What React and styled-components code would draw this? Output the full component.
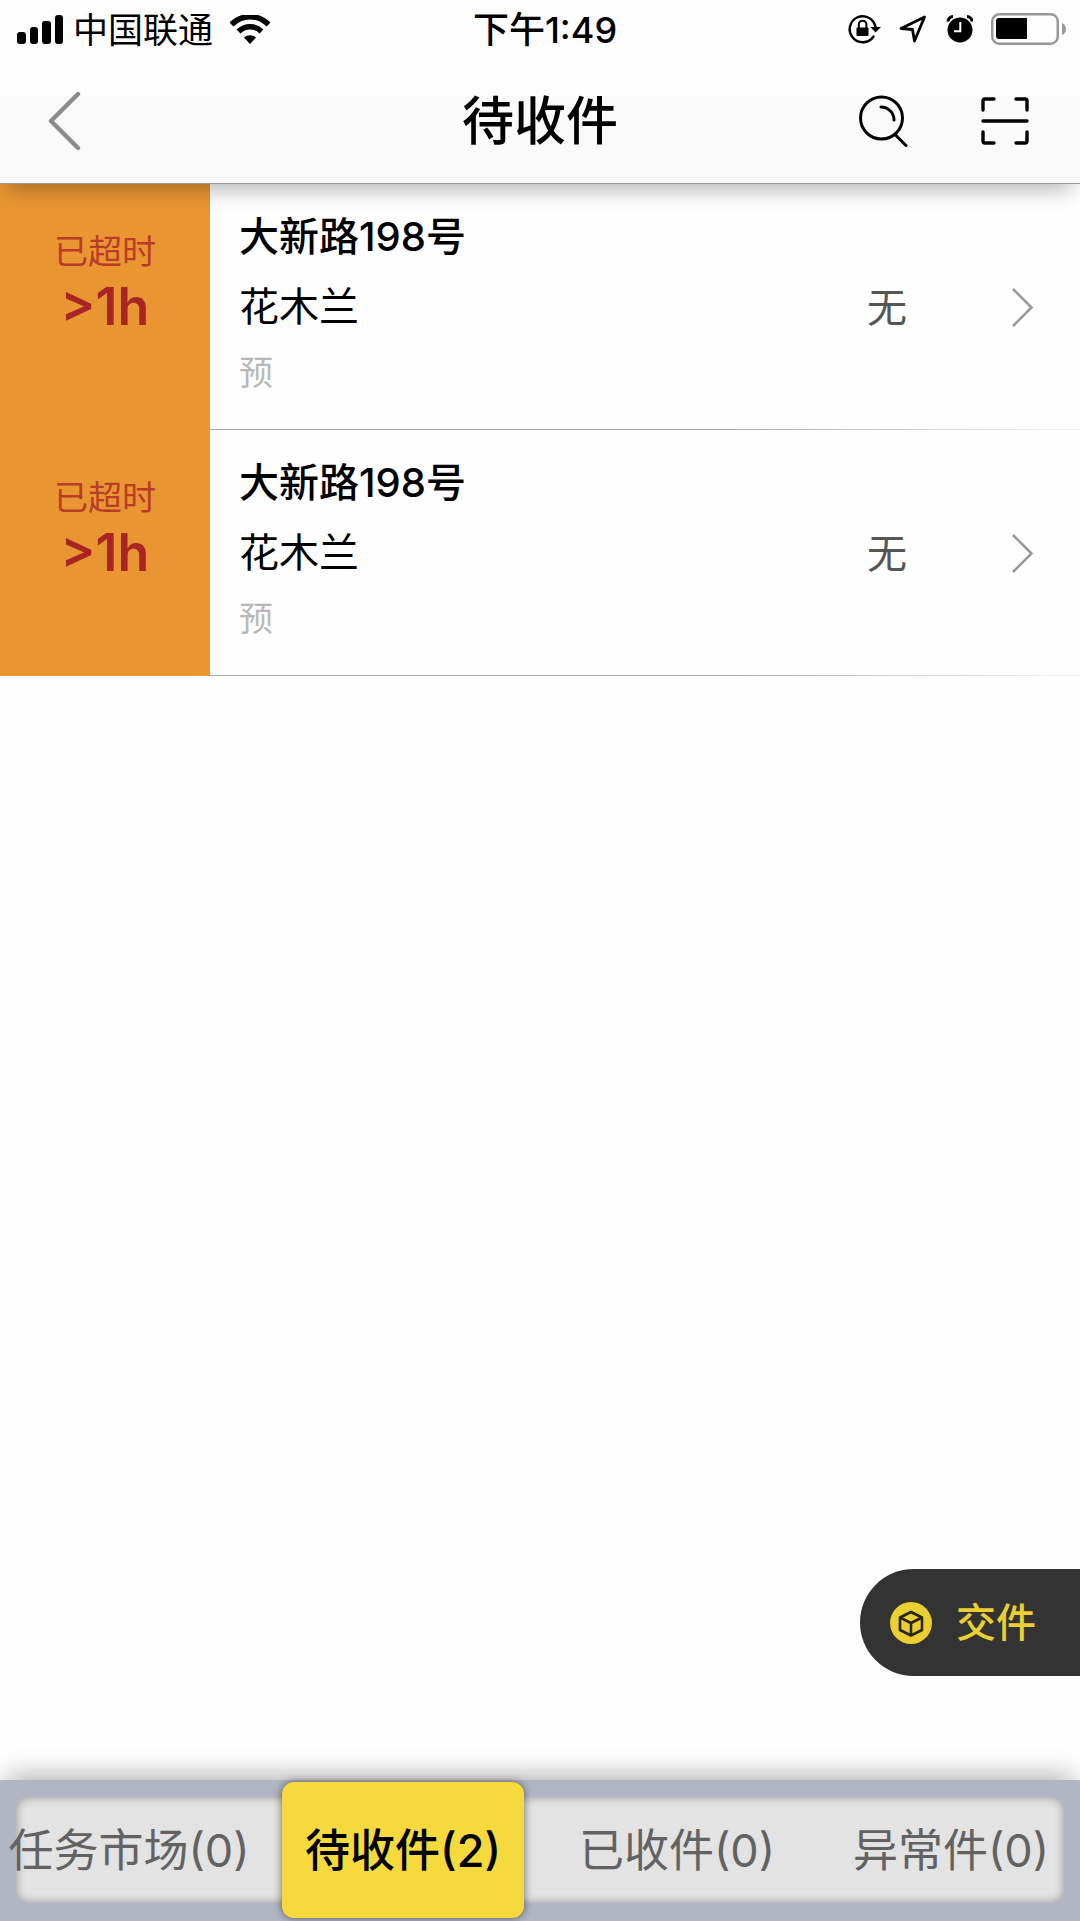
import React, { useState } from 'react';
import styled, { createGlobalStyle } from 'styled-components';

const GlobalStyle = createGlobalStyle`
  *, *::before, *::after { box-sizing: border-box; }
  body {
    margin: 0;
    background: #fefefe;
    color: #000;
    font-family: Inter, "Noto Sans CJK SC", sans-serif;
  }
  h1, h2, p, ul { margin: 0; padding: 0; }
  ul { list-style: none; }
  button {
    border: 0;
    padding: 0;
    background: none;
    color: inherit;
    font: inherit;
    cursor: pointer;
  }
  svg { display: block; flex: none; }
`;

const Screen = styled.div`
  position: relative;
  display: flex;
  flex-direction: column;
  min-height: 100vh;
  overflow: hidden;
`;

const Header = styled.header`
  position: relative;
  z-index: 1;
  background: linear-gradient(#fdfdfd 96px, #fafafa 96px);
  border-bottom: 1px solid #999;
  box-shadow: 0 14px 20px -8px rgba(0, 0, 0, 0.28);
`;

const StatusBar = styled.div`
  display: grid;
  grid-template-columns: 1fr auto 1fr;
  align-items: center;
  height: 60px;
  padding: 0 13px 0 17px;
  font-size: 35px;
  line-height: 40px;
`;

const StatusGroup = styled.div`
  display: flex;
  align-items: center;
  justify-content: ${(p) => (p.$end ? 'flex-end' : 'flex-start')};
  gap: ${(p) => p.$gap}px;
  padding-bottom: ${(p) => (p.$end ? 2 : 0)}px;
`;

const Carrier = styled.span`
  margin-right: 8px;
`;

const Clock = styled.time`
  padding-left: 6px;
  font-size: 36px;
  font-weight: 500;
`;

const NavBar = styled.div`
  display: grid;
  grid-template-columns: 1fr auto 1fr;
  align-items: center;
  height: 123px;
  padding: 0 40px 2px;
`;

const Title = styled.h1`
  padding-top: 2px;
  font-size: 52px;
  line-height: 60px;
  font-weight: 500;
`;

const IconButton = styled.button`
  display: grid;
  place-items: center;
  width: 72px;
  height: 72px;
`;

const BackButton = styled(IconButton)`
  width: 50px;
`;

const Actions = styled.div`
  display: flex;
  justify-content: flex-end;
  gap: 50px;
  margin-right: -1px;
`;

const TaskList = styled.ul`
  flex: 1;
`;

const TaskRow = styled.li`
  display: flex;
  height: 246px;
`;

const Overdue = styled.div`
  flex: none;
  display: flex;
  flex-direction: column;
  align-items: center;
  width: 210px;
  padding-top: 48px;
  background: #e99632;
`;

const OverdueLabel = styled.span`
  font-size: 34px;
  line-height: 40px;
  color: #b93b28;
`;

const OverdueTime = styled.strong`
  font-size: 52px;
  line-height: 70px;
  font-weight: 600;
  color: #a82524;
`;

const TaskButton = styled.button`
  flex: 1;
  display: flex;
  align-items: center;
  padding: 3px 41px 0 29px;
  text-align: left;
  border-bottom: 1px solid;
  border-image: linear-gradient(90deg, #aaa 0%, #aaa 60%, #eee 96%) 1;
`;

const TaskInfo = styled.span`
  flex: 1;
  display: flex;
  flex-direction: column;
  padding-bottom: 10px;
`;

const Address = styled.span`
  font-size: 40px;
  line-height: 70px;
  font-weight: 500;
`;

const Customer = styled.span`
  font-size: 40px;
  line-height: 70px;
`;

const Tag = styled.span`
  font-size: 34px;
  line-height: 62px;
  color: #b8b8b8;
`;

const Weight = styled.span`
  width: 40px;
  margin-right: 102px;
  font-size: 40px;
  line-height: 60px;
  color: #555;
`;

const HandoverButton = styled.button`
  position: absolute;
  right: 0;
  bottom: 245px;
  display: flex;
  align-items: center;
  gap: 24px;
  height: 107px;
  padding: 0 44px 0 30px;
  border-radius: 54px 0 0 54px;
  background: #333;
  color: #e9cf32;
  font-size: 40px;
  font-weight: 500;
  line-height: 60px;
`;

const TabBar = styled.nav`
  height: 141px;
  padding: 17px 16px 18px;
  background: #b2b6c3;
  box-shadow: 0 -12px 24px -6px rgba(0, 0, 0, 0.28);
`;

const Track = styled.div`
  display: flex;
  height: 106px;
  border-radius: 12px;
  background: #e3e3e3;
  box-shadow: inset 0 0 8px 1px rgba(0, 0, 0, 0.3);
`;

const Tabs = styled.div`
  flex: 1;
  display: grid;
  grid-template-columns: repeat(4, 1fr);
  margin: -15px -24px;
`;

const Tab = styled.button`
  margin: 0 16px;
  padding-top: 2px;
  border-radius: 12px;
  font-size: 45px;
  line-height: 60px;
  white-space: nowrap;
  display: flex;
  align-items: center;
  justify-content: center;
  color: ${(p) => (p.$active ? '#000' : '#626262')};
  font-weight: ${(p) => (p.$active ? 500 : 400)};
  background: ${(p) => (p.$active ? '#f6d93c' : 'transparent')};
  box-shadow: ${(p) => (p.$active ? '0 0 8px rgba(0, 0, 0, 0.55)' : 'none')};
`;

const SignalIcon = () => (
  <svg width="47" height="30" viewBox="0 0 47 30" aria-hidden="true">
    <rect x="0" y="17" width="9" height="12" rx="3" />
    <rect x="13" y="12" width="8" height="17" rx="3" />
    <rect x="25" y="6" width="9" height="23" rx="3" />
    <rect x="38" y="0" width="8" height="29" rx="3" />
  </svg>
);

const WifiIcon = () => (
  <svg width="40" height="30" viewBox="1 0 40 30" aria-hidden="true">
    <path d="M2.500 9.500C13-1 29-1 39.500 9.500" fill="none" stroke="#000" strokeWidth="5.500" />
    <path d="M9.500 16.500C16 10 26 10 32.500 16.500" fill="none" stroke="#000" strokeWidth="5.500" />
    <path d="M15 22.500C18.500 19.500 23.500 19.500 27 22.500L21 29Z" />
  </svg>
);

const LockIcon = () => (
  <svg width="33" height="30" viewBox="0 0 33 30" fill="none" stroke="#000" strokeWidth="2.400" aria-hidden="true">
    <path d="M27.500 13A13 13 0 1 0 25.500 22.500" strokeLinecap="round" />
    <path d="M22.500 13H33L27.500 18.500Z" fill="#000" stroke="none" />
    <rect x="8.500" y="13.500" width="12" height="8.500" rx="1" fill="#000" stroke="none" />
    <path d="M10.800 14V10.500a3.800 3.800 0 0 1 7.600 0V14" strokeWidth="2" />
  </svg>
);

const LocationIcon = () => (
  <svg width="28" height="30" viewBox="0 0 28 30" fill="none" stroke="#000" strokeWidth="2.800" strokeLinejoin="round" aria-hidden="true">
    <path d="M25.500 3L2 14.500L13.500 15.500L15.500 27Z" />
  </svg>
);

const AlarmIcon = () => (
  <svg width="28" height="30" viewBox="-1 0 28 30" aria-hidden="true">
    <circle cx="14" cy="16" r="12.500" />
    <path d="M2 7.500A5 5 0 0 1 7 2.500M26 7.500A5 5 0 0 0 21 2.500" fill="none" stroke="#000" strokeWidth="3" />
    <path d="M14.300 8V17.200H8" fill="none" stroke="#fff" strokeWidth="2" />
  </svg>
);

const BatteryIcon = () => (
  <svg width="76" height="32" viewBox="0 0 76 32" aria-hidden="true">
    <rect x="1.250" y="1.250" width="65.500" height="29.500" rx="7" fill="none" stroke="#999" strokeWidth="2.500" />
    <path d="M8 5H36V26H8Q5 26 5 23V8Q5 5 8 5Z" />
    <path d="M71 10Q75 12 75 16T71 22Z" fill="#999" />
  </svg>
);

const BackIcon = () => (
  <svg width="34" height="60" viewBox="0 0 34 60" fill="none" stroke="#8b8b8b" strokeWidth="4.400" strokeLinecap="round" strokeLinejoin="round" aria-hidden="true">
    <path d="M30 3L3 30L30 57" />
  </svg>
);

const SearchIcon = () => (
  <svg width="50" height="52" viewBox="0 0 50 52" fill="none" stroke="#000" strokeWidth="3" strokeLinecap="round" aria-hidden="true">
    <circle cx="23.500" cy="23" r="21" />
    <path d="M23 12A13 13 0 0 1 36 25M37 39.500L48 50.500" />
  </svg>
);

const ScanIcon = () => (
  <svg width="48" height="48" viewBox="0 0 48 48" fill="none" stroke="#000" strokeWidth="3.400" strokeLinecap="round" strokeLinejoin="round" aria-hidden="true">
    <path d="M2 13V4Q2 2 4 2H13M35 2H44Q46 2 46 4V13M46 35V44Q46 46 44 46H35M13 46H4Q2 46 2 44V35M2 24H46" />
  </svg>
);

const ChevronIcon = () => (
  <svg width="30" height="40" viewBox="0 0 30 40" fill="none" stroke="#999" strokeWidth="2.600" aria-hidden="true">
    <path d="M4 1L22.500 19.500L4 38" />
  </svg>
);

const BoxIcon = () => (
  <svg width="42" height="42" viewBox="0 0 42 42" aria-hidden="true">
    <circle cx="21" cy="21" r="21" fill="#e9cf32" />
    <path d="M21 10L32 15.500V28L21 33.500L10 28V15.500ZM10 15.500L21 21L32 15.500M21 21V33.500" fill="none" stroke="#2b2510" strokeWidth="2.600" strokeLinejoin="round" />
  </svg>
);

const tasks = [
  { id: 1, address: '大新路198号', customer: '花木兰', tag: '预', weight: '无', overdue: '>1h' },
  { id: 2, address: '大新路198号', customer: '花木兰', tag: '预', weight: '无', overdue: '>1h' },
];

const tabs = [
  { name: '任务市场', count: 0 },
  { name: '待收件', count: 2 },
  { name: '已收件', count: 0 },
  { name: '异常件', count: 0 },
];

export default function App() {
  const [active, setActive] = useState(1);

  return (
    <Screen>
      <GlobalStyle />
      <Header>
        <StatusBar>
          <StatusGroup $gap={9}>
            <SignalIcon />
            <Carrier>中国联通</Carrier>
            <WifiIcon />
          </StatusGroup>
          <Clock>下午1:49</Clock>
          <StatusGroup $end $gap={18}>
            <LockIcon />
            <LocationIcon />
            <AlarmIcon />
            <BatteryIcon />
          </StatusGroup>
        </StatusBar>
        <NavBar>
          <BackButton type="button" aria-label="返回">
            <BackIcon />
          </BackButton>
          <Title>待收件</Title>
          <Actions>
            <IconButton type="button" aria-label="搜索">
              <SearchIcon />
            </IconButton>
            <IconButton type="button" aria-label="扫描">
              <ScanIcon />
            </IconButton>
          </Actions>
        </NavBar>
      </Header>

      <TaskList>
        {tasks.map((task) => (
          <TaskRow key={task.id}>
            <Overdue>
              <OverdueLabel>已超时</OverdueLabel>
              <OverdueTime>{task.overdue}</OverdueTime>
            </Overdue>
            <TaskButton type="button">
              <TaskInfo>
                <Address>{task.address}</Address>
                <Customer>{task.customer}</Customer>
                <Tag>{task.tag}</Tag>
              </TaskInfo>
              <Weight>{task.weight}</Weight>
              <ChevronIcon />
            </TaskButton>
          </TaskRow>
        ))}
      </TaskList>

      <HandoverButton type="button">
        <BoxIcon />
        交件
      </HandoverButton>

      <TabBar>
        <Track>
          <Tabs>
            {tabs.map((tab, i) => (
              <Tab
                key={tab.name}
                type="button"
                $active={i === active}
                aria-pressed={i === active}
                onClick={() => setActive(i)}
              >
                {tab.name}({tab.count})
              </Tab>
            ))}
          </Tabs>
        </Track>
      </TabBar>
    </Screen>
  );
}
